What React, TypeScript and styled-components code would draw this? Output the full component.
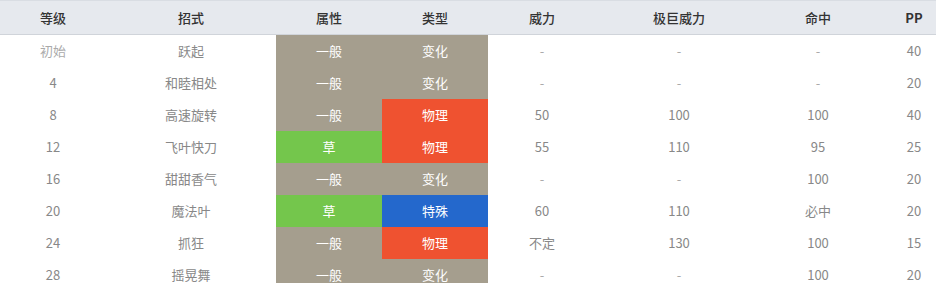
import styled, { createGlobalStyle } from "styled-components";

const GlobalStyle = createGlobalStyle`
  html, body {
    margin: 0;
    padding: 0;
    background: #fff;
    overflow: hidden;
  }
  body {
    font-family: "Noto Sans CJK SC", "Noto Sans", sans-serif;
  }
`;

const Table = styled.table`
  width: 954px;
  border-collapse: collapse;
  table-layout: fixed;
  font-size: 13px;
`;

const HeadRow = styled.tr`
  background-color: #e6e9ee;
  border-top: 1px solid #d9dde3;
  border-bottom: 1px solid #d0d4da;
`;

const Th = styled.th<{ $bold?: boolean }>`
  height: 33px;
  padding: 0;
  text-align: center;
  color: #333;
  font-weight: ${(props) => (props.$bold ? 700 : 500)};
`;

const Row = styled.tr`
  height: 32px;
`;

const Td = styled.td<{ $light?: boolean }>`
  padding: 0;
  text-align: center;
  color: ${(props) => (props.$light ? "#aaa" : "#888")};
`;

const TYPE_COLORS: Record<string, string> = {
  一般: "#a59e8e",
  草: "#74c64c",
  物理: "#ef5230",
  变化: "#a59e8e",
  特殊: "#2468cc",
};

const Badge = styled.td<{ $kind: string }>`
  padding: 0;
  text-align: center;
  color: #fff;
  background-color: ${(props) => TYPE_COLORS[props.$kind]};
`;

interface IMove {
  level: string;
  name: string;
  type: string;
  category: string;
  power: string;
  maxPower: string;
  accuracy: string;
  pp: string;
}

const moves: IMove[] = [
  { level: "初始", name: "跃起", type: "一般", category: "变化", power: "-", maxPower: "-", accuracy: "-", pp: "40" },
  { level: "4", name: "和睦相处", type: "一般", category: "变化", power: "-", maxPower: "-", accuracy: "-", pp: "20" },
  { level: "8", name: "高速旋转", type: "一般", category: "物理", power: "50", maxPower: "100", accuracy: "100", pp: "40" },
  { level: "12", name: "飞叶快刀", type: "草", category: "物理", power: "55", maxPower: "110", accuracy: "95", pp: "25" },
  { level: "16", name: "甜甜香气", type: "一般", category: "变化", power: "-", maxPower: "-", accuracy: "100", pp: "20" },
  { level: "20", name: "魔法叶", type: "草", category: "特殊", power: "60", maxPower: "110", accuracy: "必中", pp: "20" },
  { level: "24", name: "抓狂", type: "一般", category: "物理", power: "不定", maxPower: "130", accuracy: "100", pp: "15" },
  { level: "28", name: "摇晃舞", type: "一般", category: "变化", power: "-", maxPower: "-", accuracy: "100", pp: "20" },
];

const isLight = (v: string) => v === "-" || v === "初始";

function App() {
  return (
    <>
      <GlobalStyle />
      <Table>
        <colgroup>
          <col style={{ width: 106 }} />
          <col style={{ width: 170 }} />
          <col style={{ width: 106 }} />
          <col style={{ width: 106 }} />
          <col style={{ width: 108 }} />
          <col style={{ width: 166 }} />
          <col style={{ width: 112 }} />
          <col style={{ width: 80 }} />
        </colgroup>
        <thead>
          <HeadRow>
            <Th>等级</Th>
            <Th>招式</Th>
            <Th>属性</Th>
            <Th>类型</Th>
            <Th>威力</Th>
            <Th>极巨威力</Th>
            <Th>命中</Th>
            <Th $bold>PP</Th>
          </HeadRow>
        </thead>
        <tbody>
          {moves.map((m) => (
            <Row key={m.name}>
              <Td $light={isLight(m.level)}>{m.level}</Td>
              <Td>{m.name}</Td>
              <Badge $kind={m.type}>{m.type}</Badge>
              <Badge $kind={m.category}>{m.category}</Badge>
              <Td $light={isLight(m.power)}>{m.power}</Td>
              <Td $light={isLight(m.maxPower)}>{m.maxPower}</Td>
              <Td $light={isLight(m.accuracy)}>{m.accuracy}</Td>
              <Td>{m.pp}</Td>
            </Row>
          ))}
        </tbody>
      </Table>
    </>
  );
}

export default App;
